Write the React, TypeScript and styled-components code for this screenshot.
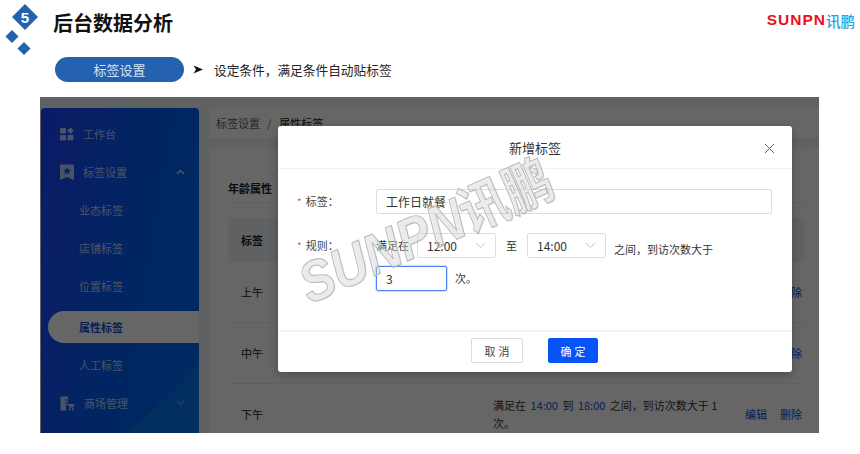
import React from "react";
import styled, { createGlobalStyle } from "styled-components";

const GlobalStyle = createGlobalStyle`
  html, body {
    margin: 0;
    padding: 0;
    background: #fff;
  }
  body {
    font-family: "Noto Sans CJK SC", "Liberation Sans", sans-serif;
    color: #222;
  }
  * {
    box-sizing: border-box;
  }
`;

const PageSC = styled.div`
  width: 860px;
  height: 454px;
  overflow: hidden;
  display: flex;
  flex-direction: column;
`;

const TopSC = styled.header`
  height: 97px;
  display: grid;
  grid-template-columns: 48px 1fr auto;
  padding: 4px 5px 0 5px;
`;

const TitleBlockSC = styled.div`
  display: flex;
  flex-direction: column;
`;

const TitleSC = styled.h1`
  margin: 0;
  height: 40px;
  font-size: 20px;
  line-height: 38px;
  font-weight: 700;
  color: #111;
`;

const SubRowSC = styled.div`
  margin-top: 13px;
  margin-left: 2px;
  display: flex;
  align-items: center;
`;

const PillSC = styled.div`
  width: 129px;
  height: 25px;
  border-radius: 13px;
  background: #2462b0;
  color: #d5e2f3;
  font-size: 13px;
  line-height: 25px;
  text-align: center;
`;

const BulletSC = styled.svg`
  margin-left: 9px;
  flex-shrink: 0;
`;

const SubTextSC = styled.span`
  margin-left: 11px;
  font-size: 12.7px;
  line-height: 25px;
  color: #222;
`;

const LogoSC = styled.div`
  display: flex;
  align-items: center;
  height: 32px;
  font-family: "Liberation Sans", sans-serif;
`;

const LogoLatinSC = styled.span`
  font-size: 15.5px;
  font-weight: 700;
  color: #e8101e;
  letter-spacing: 1px;
`;

const LogoCjkSC = styled.span`
  font-family: "Noto Sans CJK SC", sans-serif;
  font-size: 14.5px;
  font-weight: 500;
  color: #1f9be8;
`;

const ShotSC = styled.section`
  position: relative;
  width: 779px;
  height: 336px;
  margin-left: 40px;
  display: flex;
  overflow: hidden;
  background: #f0f2f5;
  padding-top: 11px;
`;

const SideSC = styled.nav`
  width: 158px;
  flex-shrink: 0;
  margin-left: 1px;
  border-radius: 4px 4px 0 0;
  padding-top: 7px;
  background:
    radial-gradient(circle 471px at -200px -50px, transparent 0 470px, rgba(30, 170, 200, 0.25) 471px),
    linear-gradient(100deg, #1f45ff 0%, #0060f5 60%, #0068f5 100%);
`;

const NavItemSC = styled.div<{ $sub?: boolean }>`
  height: 38px;
  display: flex;
  align-items: center;
  font-size: 11px;
  gap: 9px;
  padding-left: ${({ $sub }) => ($sub ? "38px" : "19px")};
  color: rgba(255, 255, 255, 0.72);
`;

const ActiveItemSC = styled.div`
  height: 32px;
  margin: 6px 0 3px 7px;
  padding-left: 31px;
  display: flex;
  align-items: center;
  font-size: 11px;
  font-weight: 700;
  color: #0a4fd8;
  background: #fff;
  border-radius: 16px 0 0 16px;
`;

const ChevronSC = styled.svg`
  margin-left: auto;
  margin-right: 14px;
`;

const MainSC = styled.main`
  flex: 1;
  min-width: 0;
  padding-left: 10px;
  display: flex;
  flex-direction: column;
`;

const CrumbSC = styled.div`
  height: 32px;
  padding-left: 7px;
  background: #fff;
  font-size: 11px;
  line-height: 30px;
  color: #666;
`;

const CrumbSepSC = styled.span`
  margin: 0 8px 0 7px;
`;

const CrumbStrongSC = styled.span`
  color: #222;
`;

const CardSC = styled.div`
  margin-top: 10px;
  flex: 1;
  background: #fff;
  padding: 0 14px 0 19px;
`;

const CardTitleSC = styled.div`
  height: 55px;
  line-height: 80px;
  font-size: 11px;
  font-weight: 700;
  border-bottom: 1px solid #eceef1;
  color: #222;
`;

const TableSC = styled.div`
  margin-top: 15px;
`;

const RowSC = styled.div<{ $head?: boolean }>`
  display: grid;
  grid-template-columns: 252px 252px 1fr;
  align-items: center;
  height: ${({ $head }) => ($head ? "44px" : "61px")};
  padding-left: 13px;
  font-size: 11px;
  line-height: 18px;
  font-weight: ${({ $head }) => ($head ? 700 : 400)};
  background: ${({ $head }) => ($head ? "#f1f3f6" : "transparent")};
  border-bottom: ${({ $head }) => ($head ? "none" : "1px solid #eceef1")};
`;

const RuleCellSC = styled.div`
  color: #333;
  padding-right: 20px;
`;

const LinkSC = styled.span`
  color: #0a4fd8;
  margin: 0 2px;
`;

const ActionsSC = styled.div`
  display: flex;
  gap: 13px;
  color: #0a4fd8;
  white-space: nowrap;
`;

const MaskSC = styled.div`
  position: absolute;
  inset: 0;
  background: rgba(0, 0, 0, 0.6);
`;

const ModalSC = styled.div`
  position: absolute;
  left: 238px;
  top: 29px;
  width: 514px;
  height: 246px;
  background: #fff;
  border-radius: 3px;
  box-shadow: 0 3px 10px rgba(0, 0, 0, 0.25);
  display: flex;
  flex-direction: column;
`;

const ModalHeadSC = styled.div`
  position: relative;
  height: 43px;
  flex-shrink: 0;
  border-bottom: 1px solid #f0f0f0;
  font-size: 13px;
  line-height: 43px;
  text-align: center;
  color: #333;
`;

const CloseSC = styled.svg`
  position: absolute;
  right: 17px;
  top: 17px;
`;

const ModalBodySC = styled.div`
  flex: 1;
  padding: 20px 20px 0 19px;
`;

const FieldSC = styled.div<{ $gap?: number }>`
  display: flex;
  margin-bottom: ${({ $gap }) => $gap ?? 0}px;
`;

const LabelSC = styled.label`
  width: 79px;
  flex-shrink: 0;
  font-size: 11px;
  line-height: 25px;
  color: #444;
`;

const StarSC = styled.span`
  color: #f0504f;
  margin-right: 4px;
  font-size: 10px;
`;

const InputSC = styled.div<{ $focus?: boolean; $w?: string }>`
  width: ${({ $w }) => $w ?? "100%"};
  height: 25px;
  border-radius: 2px;
  border: 1px solid ${({ $focus }) => ($focus ? "#4d83f5" : "#dedede")};
  box-shadow: ${({ $focus }) => ($focus ? "0 0 0 1px rgba(77,131,245,.25)" : "none")};
  padding-left: 9px;
  font-size: 12px;
  line-height: 23px;
  color: #333;
`;

const RuleWrapSC = styled.div`
  flex: 1;
  display: flex;
  flex-wrap: wrap;
  row-gap: 2px;
  align-items: flex-start;
  font-size: 11px;
  color: #333;
`;

const RuleTextSC = styled.span<{ $l?: number; $r?: number; $down?: number }>`
  line-height: 25px;
  margin-left: ${({ $l }) => $l ?? 0}px;
  margin-right: ${({ $r }) => $r ?? 0}px;
  margin-top: ${({ $down }) => $down ?? 0}px;
`;

const SelectSC = styled.div`
  width: 79px;
  height: 25px;
  padding: 0 9px;
  border: 1px solid #dedede;
  border-radius: 2px;
  display: flex;
  align-items: center;
  justify-content: space-between;
  font-size: 12px;
  color: #333;
`;

const BreakSC = styled.div`
  flex-basis: 100%;
`;

const ModalFootSC = styled.div`
  height: 42px;
  flex-shrink: 0;
  border-top: 2px solid #f4f4f4;
  padding: 6px 0 0 193px;
  display: flex;
  gap: 25px;
`;

const ButtonSC = styled.button<{ $primary?: boolean }>`
  height: 25px;
  width: ${({ $primary }) => ($primary ? "50px" : "52px")};
  padding: 0 0 0 3px;
  font-family: inherit;
  font-size: 11px;
  letter-spacing: 3px;
  border-radius: 2px;
  border: 1px solid ${({ $primary }) => ($primary ? "#0654f5" : "#dcdcdc")};
  background: ${({ $primary }) => ($primary ? "#0654f5" : "#fff")};
  color: ${({ $primary }) => ($primary ? "#fff" : "#444")};
`;

const WatermarkSC = styled.div`
  position: absolute;
  left: 276px;
  top: 157px;
  transform-origin: 0 100%;
  transform: rotate(-24deg) scaleY(1.14);
  font-family: "Liberation Sans", sans-serif;
  font-size: 50px;
  line-height: 60px;
  font-weight: 700;
  font-style: italic;
  white-space: nowrap;
  color: rgba(236, 236, 236, 0.35);
  -webkit-text-stroke: 1px #bcbcbc;
  text-shadow: 1px 1px 0 rgba(0, 0, 0, 0.08);
`;

const WatermarkCjkSC = styled.span`
  font-family: "Noto Sans CJK SC", sans-serif;
  font-style: normal;
  font-weight: 700;
  font-size: 48px;
`;

const Diamonds = () => (
  <svg width="40" height="56" viewBox="0 0 40 56">
    <polygon points="20,0 33,13 20,26 7,13" fill="#2462b0" />
    <polygon points="7,26 13.5,32.5 7,39 0.5,32.5" fill="#2462b0" />
    <polygon points="19,38 25.5,44.5 19,51 12.5,44.5" fill="#2462b0" />
    <text x="20" y="18.5" textAnchor="middle" fontSize="15" fontWeight="700" fill="#fff" fontFamily="Liberation Sans, sans-serif">
      5
    </text>
  </svg>
);

const Bullet = () => (
  <BulletSC width="10" height="9" viewBox="0 0 10 9">
    <path d="M0.500 0.500L10 4.500L0.500 8.500L3 4.500z" fill="#111" />
  </BulletSC>
);

const BoardIcon = () => (
  <svg width="14" height="14" viewBox="0 0 14 14" fill="currentColor">
    <rect x="0" y="1" width="6" height="5.5" rx="1" />
    <polygon points="10.5,0.5 14,3.7 10.5,7 7.2,3.7" />
    <rect x="0" y="8" width="6" height="5.5" rx="1" />
    <rect x="7.5" y="8" width="6" height="5.5" rx="1" />
  </svg>
);

const TagIcon = () => (
  <svg width="14" height="16" viewBox="0 0 14 16">
    <path d="M1 0.500h12a1 1 0 0 1 1 1V16l-7-3-7 3V1.500a1 1 0 0 1 1-1z" fill="currentColor" />
    <polygon points="7,3 8.200,5.800 11,6 8.900,7.900 9.600,10.600 7,9.100 4.400,10.600 5.100,7.900 3,6 5.800,5.800" fill="#0060f5" />
  </svg>
);

const MallIcon = () => (
  <svg width="15" height="15" viewBox="0 0 15 15" fill="currentColor">
    <path d="M0.500 0.500h7.500v3h-3v1h3v2h-3v1h3v1.500h-2v5.500H0.500z" />
    <path d="M8 8h6.500l-1 3.500H9.200z" />
    <circle cx="9.800" cy="13.300" r="1.100" />
    <circle cx="13" cy="13.300" r="1.100" />
  </svg>
);

const Chevron = ({ up, color }: { up?: boolean; color: string }) => (
  <ChevronSC width="9" height="6" viewBox="0 0 9 6" fill="none">
    <path d={up ? "M1 5l3.500-3.500L8 5" : "M1 1l3.500 3.500L8 1"} stroke={color} strokeWidth="1.400" />
  </ChevronSC>
);

const SelectArrow = () => (
  <svg width="11" height="7" viewBox="0 0 11 7" fill="none">
    <path d="M1 1l4.500 4.500L10 1" stroke="#c4c4c4" strokeWidth="1" />
  </svg>
);

const subItems = ["业态标签", "店铺标签", "位置标签"];

const rows = [
  { name: "上午", from: "08:00", to: "12:00" },
  { name: "中午", from: "12:00", to: "14:00" },
  { name: "下午", from: "14:00", to: "18:00" },
];

export default function App() {
  return (
    <PageSC>
      <GlobalStyle />
      <TopSC>
        <Diamonds />
        <TitleBlockSC>
          <TitleSC>后台数据分析</TitleSC>
          <SubRowSC>
            <PillSC>标签设置</PillSC>
            <Bullet />
            <SubTextSC>设定条件，满足条件自动贴标签</SubTextSC>
          </SubRowSC>
        </TitleBlockSC>
        <LogoSC>
          <LogoLatinSC>SUNPN</LogoLatinSC>
          <LogoCjkSC>讯鹏</LogoCjkSC>
        </LogoSC>
      </TopSC>

      <ShotSC>
        <SideSC>
          <NavItemSC>
            <BoardIcon />
            工作台
          </NavItemSC>
          <NavItemSC>
            <TagIcon />
            标签设置
            <Chevron up color="rgba(255,255,255,.8)" />
          </NavItemSC>
          {subItems.map((item) => (
            <NavItemSC $sub key={item}>
              {item}
            </NavItemSC>
          ))}
          <ActiveItemSC>属性标签</ActiveItemSC>
          <NavItemSC $sub>人工标签</NavItemSC>
          <NavItemSC>
            <MallIcon />
            商场管理
            <Chevron color="rgba(255,255,255,.35)" />
          </NavItemSC>
        </SideSC>

        <MainSC>
          <CrumbSC>
            标签设置
            <CrumbSepSC>/</CrumbSepSC>
            <CrumbStrongSC>属性标签</CrumbStrongSC>
          </CrumbSC>
          <CardSC>
            <CardTitleSC>年龄属性</CardTitleSC>
            <TableSC>
              <RowSC $head>
                <span>标签</span>
                <span>规则</span>
                <span />
              </RowSC>
              {rows.map((row) => (
                <RowSC key={row.name}>
                  <span>{row.name}</span>
                  <RuleCellSC>
                    满足在 <LinkSC>{row.from}</LinkSC> 到 <LinkSC>{row.to}</LinkSC> 之间，到访次数大于 1 次。
                  </RuleCellSC>
                  <ActionsSC>
                    <span>编辑</span>
                    <span>删除</span>
                  </ActionsSC>
                </RowSC>
              ))}
            </TableSC>
          </CardSC>
        </MainSC>

        <MaskSC />

        <ModalSC>
          <ModalHeadSC>
            新增标签
            <CloseSC width="11" height="11" viewBox="0 0 11 11" fill="none">
              <path d="M1 1l9 9M10 1l-9 9" stroke="#666" strokeWidth="1" />
            </CloseSC>
          </ModalHeadSC>
          <ModalBodySC>
            <FieldSC $gap={19}>
              <LabelSC>
                <StarSC>*</StarSC>标签：
              </LabelSC>
              <InputSC>工作日就餐</InputSC>
            </FieldSC>
            <FieldSC>
              <LabelSC>
                <StarSC>*</StarSC>规则：
              </LabelSC>
              <RuleWrapSC>
                <RuleTextSC $r={8}>满足在</RuleTextSC>
                <SelectSC>
                  12:00
                  <SelectArrow />
                </SelectSC>
                <RuleTextSC $l={10} $r={10}>
                  至
                </RuleTextSC>
                <SelectSC>
                  14:00
                  <SelectArrow />
                </SelectSC>
                <RuleTextSC $l={8} $down={4}>
                  之间，到访次数大于
                </RuleTextSC>
                <BreakSC />
                <InputSC $focus $w="71px">
                  3
                </InputSC>
                <RuleTextSC $l={8}>次。</RuleTextSC>
              </RuleWrapSC>
            </FieldSC>
          </ModalBodySC>
          <ModalFootSC>
            <ButtonSC>取消</ButtonSC>
            <ButtonSC $primary>确定</ButtonSC>
          </ModalFootSC>
        </ModalSC>

        <WatermarkSC>
          SUNPN<WatermarkCjkSC>讯鹏</WatermarkCjkSC>
        </WatermarkSC>
      </ShotSC>
    </PageSC>
  );
}
